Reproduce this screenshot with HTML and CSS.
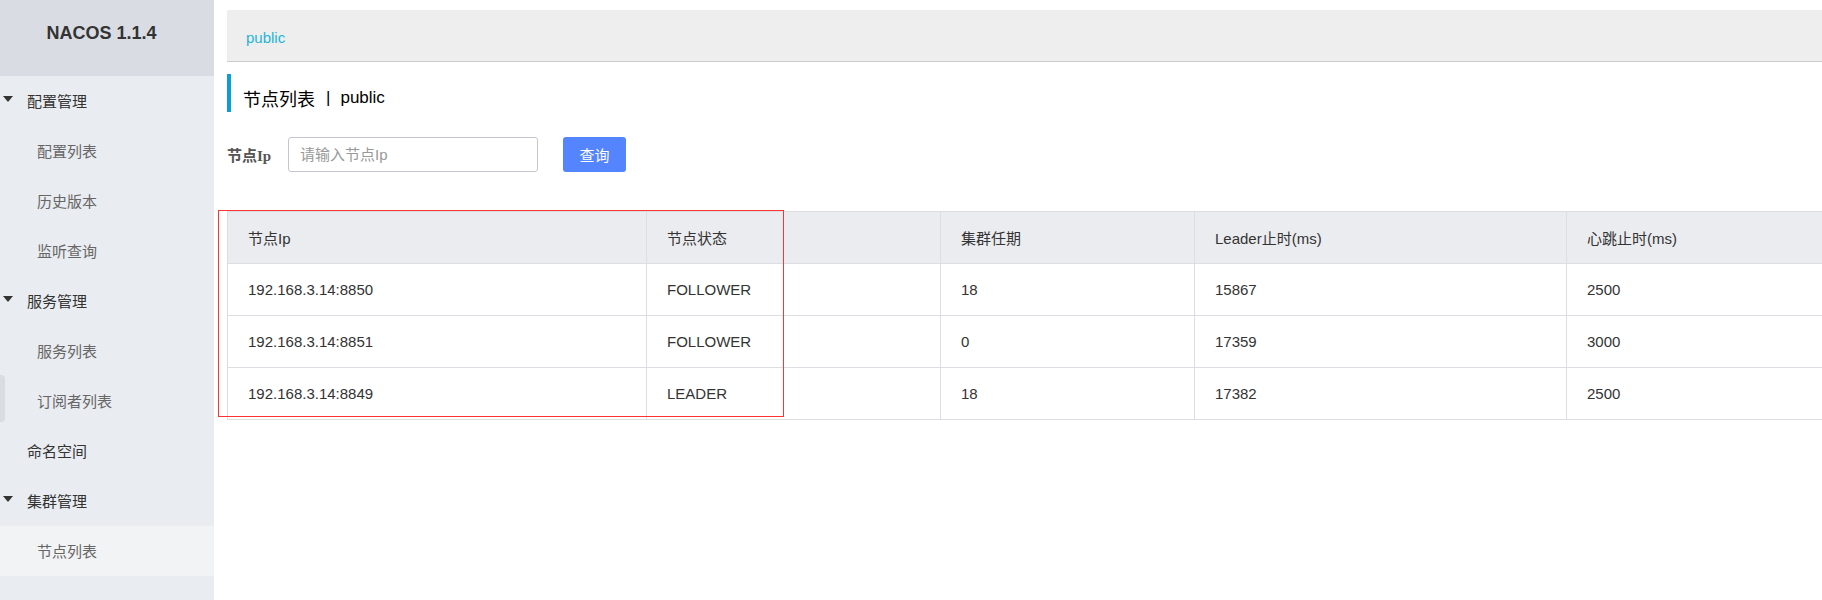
FILE: index.html
```html
<!DOCTYPE html>
<html lang="zh-CN">
<head>
<meta charset="utf-8">
<title>Nacos 节点列表</title>
<link rel="stylesheet" href="styles.css">
</head>
<body>
<div class="app">
  <aside class="sidebar">
    <div class="logo">NACOS 1.1.4</div>
    <ul class="menu">
      <li class="item group"><span class="caret"></span>配置管理</li>
      <li class="item sub">配置列表</li>
      <li class="item sub">历史版本</li>
      <li class="item sub">监听查询</li>
      <li class="item group"><span class="caret"></span>服务管理</li>
      <li class="item sub">服务列表</li>
      <li class="item sub">订阅者列表</li>
      <li class="item top">命名空间</li>
      <li class="item group"><span class="caret"></span>集群管理</li>
      <li class="item sub active">节点列表</li>
    </ul>
    <div class="thumb"></div>
  </aside>
  <main class="main">
    <div class="breadcrumb">public</div>
    <h1 class="title"><span class="title-cn">节点列表</span><span class="sep">|</span>public</h1>
    <form class="search">
      <label class="label">节点Ip</label>
      <input class="input" type="text" placeholder="请输入节点Ip">
      <button class="btn" type="button">查询</button>
    </form>
    <div class="table-wrap">
      <table class="grid">
        <colgroup>
          <col class="c1"><col class="c2"><col class="c3"><col class="c4"><col>
        </colgroup>
        <thead>
          <tr><th>节点Ip</th><th>节点状态</th><th>集群任期</th><th>Leader止时(ms)</th><th>心跳止时(ms)</th></tr>
        </thead>
        <tbody>
          <tr><td>192.168.3.14:8850</td><td>FOLLOWER</td><td>18</td><td>15867</td><td>2500</td></tr>
          <tr><td>192.168.3.14:8851</td><td>FOLLOWER</td><td>0</td><td>17359</td><td>3000</td></tr>
          <tr><td>192.168.3.14:8849</td><td>LEADER</td><td>18</td><td>17382</td><td>2500</td></tr>
        </tbody>
      </table>
      <div class="highlight"></div>
    </div>
  </main>
</div>
</body>
</html>
```

FILE: styles.css
```css
* { box-sizing: border-box; }
html, body { margin: 0; padding: 0; }
body {
  width: 1822px;
  height: 600px;
  overflow: hidden;
  background: #fff;
  font-family: "Liberation Sans", "Noto Sans CJK SC", sans-serif;
  color: #333;
}
.app {
  display: flex;
  height: 600px;
}
.sidebar {
  position: relative;
  width: 214px;
  flex: 0 0 214px;
  background: #e9ecf0;
  height: 600px;
}
.logo {
  height: 76px;
  background: #d9dde3;
  display: flex;
  align-items: center;
  justify-content: center;
  padding-right: 11px;
  padding-bottom: 10px;
  font-size: 18px;
  font-weight: bold;
  color: #333;
}
.menu {
  list-style: none;
  margin: 0;
  padding: 0;
}
.item {
  height: 50px;
  display: flex;
  align-items: center;
  padding-bottom: 2px;
  font-size: 15px;
  font-family: "Noto Sans CJK SC", sans-serif;
}
.group {
  padding-left: 3px;
  color: #333;
}
.caret {
  width: 0;
  height: 0;
  border-left: 5px solid transparent;
  border-right: 5px solid transparent;
  border-top: 6px solid #333;
  margin-right: 14px;
  margin-top: -2px;
}
.top {
  padding-left: 27px;
  color: #333;
}
.sub {
  padding-left: 37px;
  color: #666;
}
.active {
  background: #f2f3f5;
}
.thumb {
  position: absolute;
  left: 0;
  top: 375px;
  width: 5px;
  height: 47px;
  background: #d9dde3;
  border-radius: 0 4px 4px 0;
}
.main {
  flex: 1;
  min-width: 0;
  padding-left: 13px;
  overflow: hidden;
}
.breadcrumb {
  margin-top: 10px;
  height: 52px;
  background: #eee;
  border-bottom: 1px solid #ccc;
  padding-left: 19px;
  padding-top: 3px;
  display: flex;
  align-items: center;
  font-size: 15px;
  color: #1fb5d9;
}
.title {
  margin: 12px 0 0;
  height: 38px;
  border-left: 4px solid #0a9fd5;
  padding-left: 12px;
  padding-top: 10px;
  display: flex;
  align-items: center;
  font-size: 17px;
  font-weight: normal;
  color: #000;
  font-family: "Liberation Sans", "Noto Sans CJK SC", sans-serif;
}
.title-cn {
  font-size: 18px;
  font-family: "Noto Sans CJK SC", sans-serif;
}
.sep {
  margin: 0 10px 0 11px;
}
.search {
  margin: 25px 0 0;
  display: flex;
  align-items: center;
  height: 35px;
}
.label {
  width: 61px;
  font-family: "Liberation Serif", "Noto Sans CJK SC", serif;
  font-weight: bold;
  font-size: 15px;
  color: #555;
}
.input {
  width: 250px;
  height: 35px;
  border: 1px solid #c4c6cf;
  border-radius: 3px;
  padding: 0 11px;
  font-size: 15px;
  font-family: "Liberation Sans", "Noto Sans CJK SC", sans-serif;
  color: #333;
  outline: none;
}
.input::placeholder {
  color: #999;
}
.btn {
  margin-left: 25px;
  width: 63px;
  height: 35px;
  border: none;
  border-radius: 3px;
  background: #5584ff;
  color: #fff;
  font-size: 15px;
  font-family: "Noto Sans CJK SC", sans-serif;
  padding: 0;
}
.table-wrap {
  position: relative;
  margin: 39px 0 0 0;
}
.grid {
  width: calc(100% + 30px);
  table-layout: fixed;
  border-collapse: collapse;
  border: 1px solid #dcdee3;
  font-size: 15px;
}
.c1 { width: 419px; }
.c2 { width: 294px; }
.c3 { width: 254px; }
.c4 { width: 372px; }
.grid th, .grid td {
  height: 52px;
  padding: 0 20px;
  border: 1px solid #dcdee3;
  text-align: left;
  font-weight: normal;
  color: #333;
}
.grid th {
  background: #ebecf0;
}
.highlight {
  position: absolute;
  left: -9px;
  top: -1px;
  width: 566px;
  height: 207px;
  border: 1px solid #f33;
  pointer-events: none;
}
```
